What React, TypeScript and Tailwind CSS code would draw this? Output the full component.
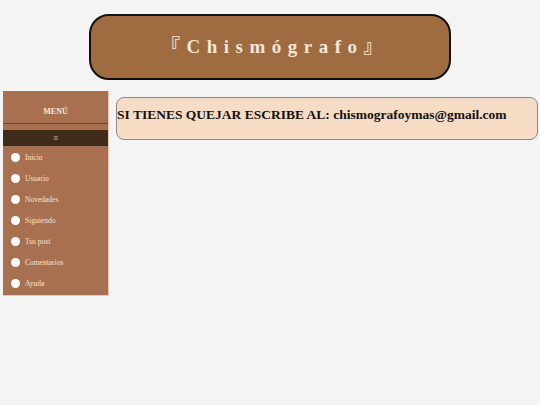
const items = [
  "Inicio",
  "Usuario",
  "Novedades",
  "Siguiendo",
  "Tus post",
  "Comentarios",
  "Ayuda",
];

export default function App() {
  return (
    <div className="min-h-[405px] w-[540px] bg-[#f4f4f4] font-['Liberation_Serif',serif]">
      {/* Title banner */}
      <div className="pt-[14px]">
        <div className="ml-[89px] flex h-[66px] w-[362px] items-center justify-center rounded-[20px] border-2 border-[#111] bg-[#9f6c42] pl-[10px]">
          <h1 className="font-['Liberation_Serif','Noto_Sans_CJK_JP',serif] text-[19px] font-bold tracking-[6.5px] text-[#f4e6d8]">
            『Chismógrafo』
          </h1>
        </div>
      </div>

      <div className="mt-[11px] flex items-start">
        {/* Sidebar menu */}
        <nav className="ml-[3px] w-[106px] border-r border-b border-[#e8c9b5] bg-[#a87050] pb-[1px]">
          <div className="flex h-[33px] items-end justify-center border-b border-[#6d4429] pb-[5px] text-[8px] font-bold text-[#f6e8dc]">
            MENÚ
          </div>
          <div className="mt-[6px] flex h-[16px] items-center justify-center bg-[#3e2b1a] text-[9px] leading-none text-[#cdbfb2]">
            ≡
          </div>
          <ul className="mt-[1px] flex flex-col">
            {items.map((item) => (
              <li key={item} className="flex h-[21px] items-center gap-[5px] pl-[8px]">
                <span className="inline-block size-[9px] rounded-full bg-white" />
                <span className="text-[7.5px] text-[#f3e3d6]">{item}</span>
              </li>
            ))}
          </ul>
        </nav>

        {/* Notice box */}
        <div className="ml-[7px] mt-[6px] h-[43px] w-[422px] rounded-[8px] border border-[#8a8a8a] bg-[#f6dcc4]">
          <h2 className="mt-[10px] whitespace-nowrap text-[13.5px] font-bold leading-none text-[#111]">
            SI TIENES QUEJAR ESCRIBE AL: chismografoymas@gmail.com
          </h2>
        </div>
      </div>
    </div>
  );
}
